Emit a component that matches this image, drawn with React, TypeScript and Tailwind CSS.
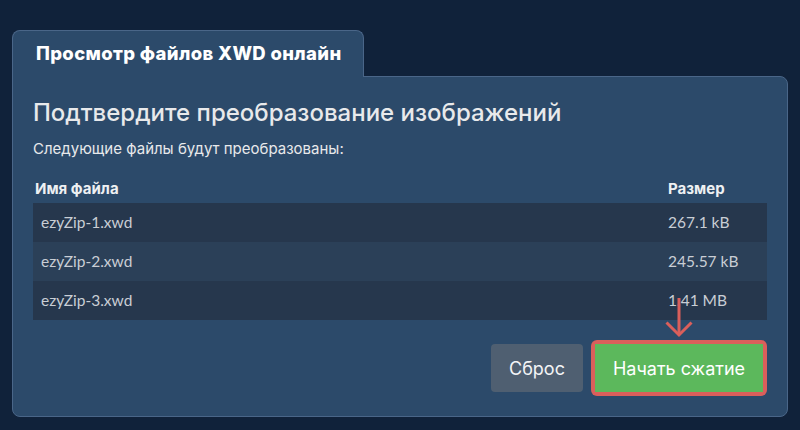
import React from 'react'

const FILES = [
  { name: 'ezyZip-1.xwd', size: '267.1 kB' },
  { name: 'ezyZip-2.xwd', size: '245.57 kB' },
  { name: 'ezyZip-3.xwd', size: '1.41 MB' },
]

export default function App() {
  return (
    <div
      className="w-[800px] h-[430px] bg-[#10223a] pt-[30px] pl-[12px] overflow-hidden"
      style={{ fontFamily: 'Inter, "Noto Sans", sans-serif' }}
    >
      <div className="w-[776px]">
        {/* tab */}
        <div className="relative z-10 -mb-px w-[352px] h-[47px] bg-[#2c4a6a] border-x border-t border-[#4a6688] rounded-t-lg flex items-center pl-[23px]">
          <span className="text-white font-extrabold text-[18.5px] tracking-[0.35px]">Просмотр файлов XWD онлайн</span>
        </div>

        {/* panel */}
        <div className="relative bg-[#2c4a6a] border border-[#4a6688] rounded-b-lg rounded-tr-lg px-5 pt-5 pb-5">
          <h1 className="text-[#e8e9eb] text-[24px] leading-8 font-medium">
            Подтвердите преобразование изображений
          </h1>
          <p className="mt-2.5 text-[#e8e9eb] text-[15px] leading-5">Следующие файлы будут преобразованы:</p>

          <div className="mt-5" style={{ fontFamily: 'Lato, "Noto Sans", sans-serif' }}>
            <div
              className="grid grid-cols-[1fr_107px] pb-1 text-[#eef0f2] text-[15px] font-bold leading-5"
              style={{ fontFamily: 'Inter, "Noto Sans", sans-serif' }}
            >
              <div className="pl-0.5">Имя файла</div>
              <div className="pl-2">Размер</div>
            </div>
            {FILES.map((f, i) => (
              <div
                key={f.name}
                className={`grid grid-cols-[1fr_107px] h-[39px] items-center text-[#c9ced5] text-[15.5px] ${
                  i % 2 === 0 ? 'bg-[#26374d]' : 'bg-[#2b4058]'
                }`}
              >
                <div className="pl-2">{f.name}</div>
                <div className="pl-2">{f.size}</div>
              </div>
            ))}
          </div>

          <div className="mt-5 flex justify-end items-center gap-2">
            <button className="w-[92px] h-12 rounded bg-[#4f5f71] text-[#f3f4f6] text-[18px]">Сброс</button>
            <div className="p-1 rounded-md bg-[#da5f5b]">
              <button className="w-[168px] h-12 bg-[#5cb85c] text-white text-[18px]">Начать сжатие</button>
            </div>
          </div>

          {/* pointer arrow */}
          <svg
            className="absolute left-[652px] top-[220px]"
            width="30"
            height="42"
            viewBox="0 0 30 42"
            fill="none"
            stroke="#da5f5b"
            strokeWidth="3"
          >
            <path d="M14 1 V38" />
            <path d="M1.5 25.5 L14 38 L26.5 25.5" />
          </svg>
        </div>
      </div>
    </div>
  )
}
